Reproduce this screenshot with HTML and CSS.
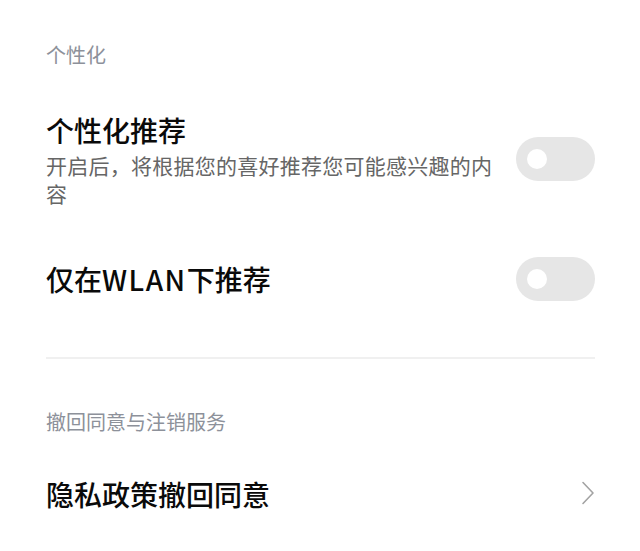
FILE: index.html
```html
<!DOCTYPE html>
<html lang="zh-CN">
<head>
<meta charset="utf-8">
<title>个性化设置</title>
<link rel="stylesheet" href="styles.css">
</head>
<body>
<main class="page">
  <div class="section-title first">个性化</div>
  <div class="row row-first">
    <div class="row-text">
      <div class="row-title">个性化推荐</div>
      <div class="row-desc">开启后，将根据您的喜好推荐您可能感兴趣的内容</div>
    </div>
    <div class="switch"><span class="knob"></span></div>
  </div>
  <div class="row row-second">
    <div class="row-text">
      <div class="row-title">仅在<span class="latin">WLAN</span>下推荐</div>
    </div>
    <div class="switch"><span class="knob"></span></div>
  </div>
  <div class="divider"></div>
  <div class="section-title second">撤回同意与注销服务</div>
  <div class="row row-link">
    <div class="row-text">
      <div class="row-title">隐私政策撤回同意</div>
    </div>
    <svg class="chevron" width="14" height="24" viewBox="0 0 14 24" aria-hidden="true">
      <path d="M2 1.5 L12 12 L2 22.5" fill="none" stroke="#a3a3a3" stroke-width="1.6" stroke-linecap="round" stroke-linejoin="round"/>
    </svg>
  </div>
</main>
</body>
</html>
```

FILE: styles.css
```css
html, body {
  margin: 0;
  padding: 0;
  background: #ffffff;
}

body {
  font-family: "Noto Sans CJK SC", "Noto Sans", sans-serif;
  color: #000000;
}

.page {
  padding: 0 45px 0 46px;
}

.section-title {
  font-size: 20px;
  line-height: 30px;
  color: #8d919a;
}

.section-title.first {
  padding-top: 40px;
}

.section-title.second {
  margin-top: 48px;
}

.row {
  display: flex;
  align-items: center;
  justify-content: space-between;
}

.row-first {
  margin-top: 43px;
}

.row-second {
  margin-top: 50px;
}

.row-link {
  margin-top: 40px;
}

.row-text {
  flex: 0 1 455px;
  min-width: 0;
}

.row-title {
  font-size: 28px;
  line-height: 34px;
  font-weight: 500;
  color: #0a0a0a;
}

.latin {
  letter-spacing: 1.5px;
}

.row-desc {
  margin-top: 4px;
  font-size: 21px;
  line-height: 28px;
  letter-spacing: 0.25px;
  color: #666666;
}

.row-first .switch {
  margin-top: -3px;
}

.switch {
  position: relative;
  flex: none;
  width: 79px;
  height: 44px;
  border-radius: 22px;
  background: #e6e6e6;
}

.knob {
  position: absolute;
  left: 11px;
  top: 12px;
  width: 20px;
  height: 20px;
  border-radius: 50%;
  background: #ffffff;
}

.divider {
  margin-top: 56px;
  height: 2px;
  background: #f0f0f0;
}

.chevron {
  flex: none;
  margin-top: -3px;
}
```
